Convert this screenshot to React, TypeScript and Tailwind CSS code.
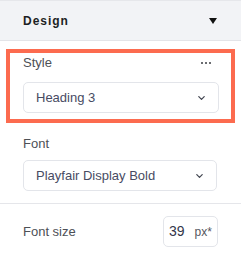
import React from "react";

function Chevron() {
  return (
    <svg width="7" height="4" viewBox="0 0 7 4" fill="none">
      <path d="M0.8 0.6l2.7 2.7 2.7-2.7" stroke="#40444f" strokeWidth="1.2" strokeLinecap="round" strokeLinejoin="round" />
    </svg>
  );
}

function Select({ value }: { value: string }) {
  return (
    <div className="flex h-[31px] items-center justify-between rounded-[5px] border border-[#e3e5ea] bg-white pl-[12px] pr-[13px]">
      <span className="text-[13px] text-[#474b63]">{value}</span>
      <Chevron />
    </div>
  );
}

export default function App() {
  return (
    <div className="h-[271px] w-[241px] overflow-hidden bg-white font-['Liberation_Sans',Arial,sans-serif] text-[#4d5056]">
      <div className="flex h-[41px] items-center justify-between border-b border-t border-b-[#e3e4e8] border-t-[#e6e7eb] bg-[#f2f3f6] pl-[23px] pr-[24px]">
        <span className="text-[12px] font-bold tracking-[0.08em] text-[#1d1f24]">Design</span>
        <svg width="8" height="6" viewBox="0 0 8 6">
          <path d="M0 0h8L4 6z" fill="#111" />
        </svg>
      </div>

      <div className="mx-[6px] mt-[8px] h-[74px] border-4 border-[#fc6b4f] pl-[13px] pr-[12px]">
        <div className="flex h-[20px] items-center justify-between">
          <span className="text-[13px]">Style</span>
          <svg width="10" height="2" viewBox="0 0 10 2" className="mr-[8px]">
            <circle cx="1" cy="1" r="1" fill="#3a3c42" />
            <circle cx="5" cy="1" r="1" fill="#3a3c42" />
            <circle cx="9" cy="1" r="1" fill="#3a3c42" />
          </svg>
        </div>
        <div className="mt-[9px]">
          <Select value="Heading 3" />
        </div>
      </div>

      <div className="mt-[11px] pl-[23px] pr-[24px]">
        <div className="flex h-[20px] items-center">
          <span className="text-[13px]">Font</span>
        </div>
        <div className="mt-[6px]">
          <Select value="Playfair Display Bold" />
        </div>
      </div>

      <div className="mt-[12px] border-t border-[#e5e6ea]" />

      <div className="mt-[12px] flex items-center justify-between pl-[23px] pr-[23px]">
        <span className="text-[13px]">Font size</span>
        <div className="flex h-[31px] w-[55px] items-center rounded-[5px] border border-[#e3e5ea] pl-[5px]">
          <span className="text-[14px] text-[#33364a]">39</span>
          <span className="ml-[10px] text-[12px] text-[#55575e]">px*</span>
        </div>
      </div>
    </div>
  );
}
